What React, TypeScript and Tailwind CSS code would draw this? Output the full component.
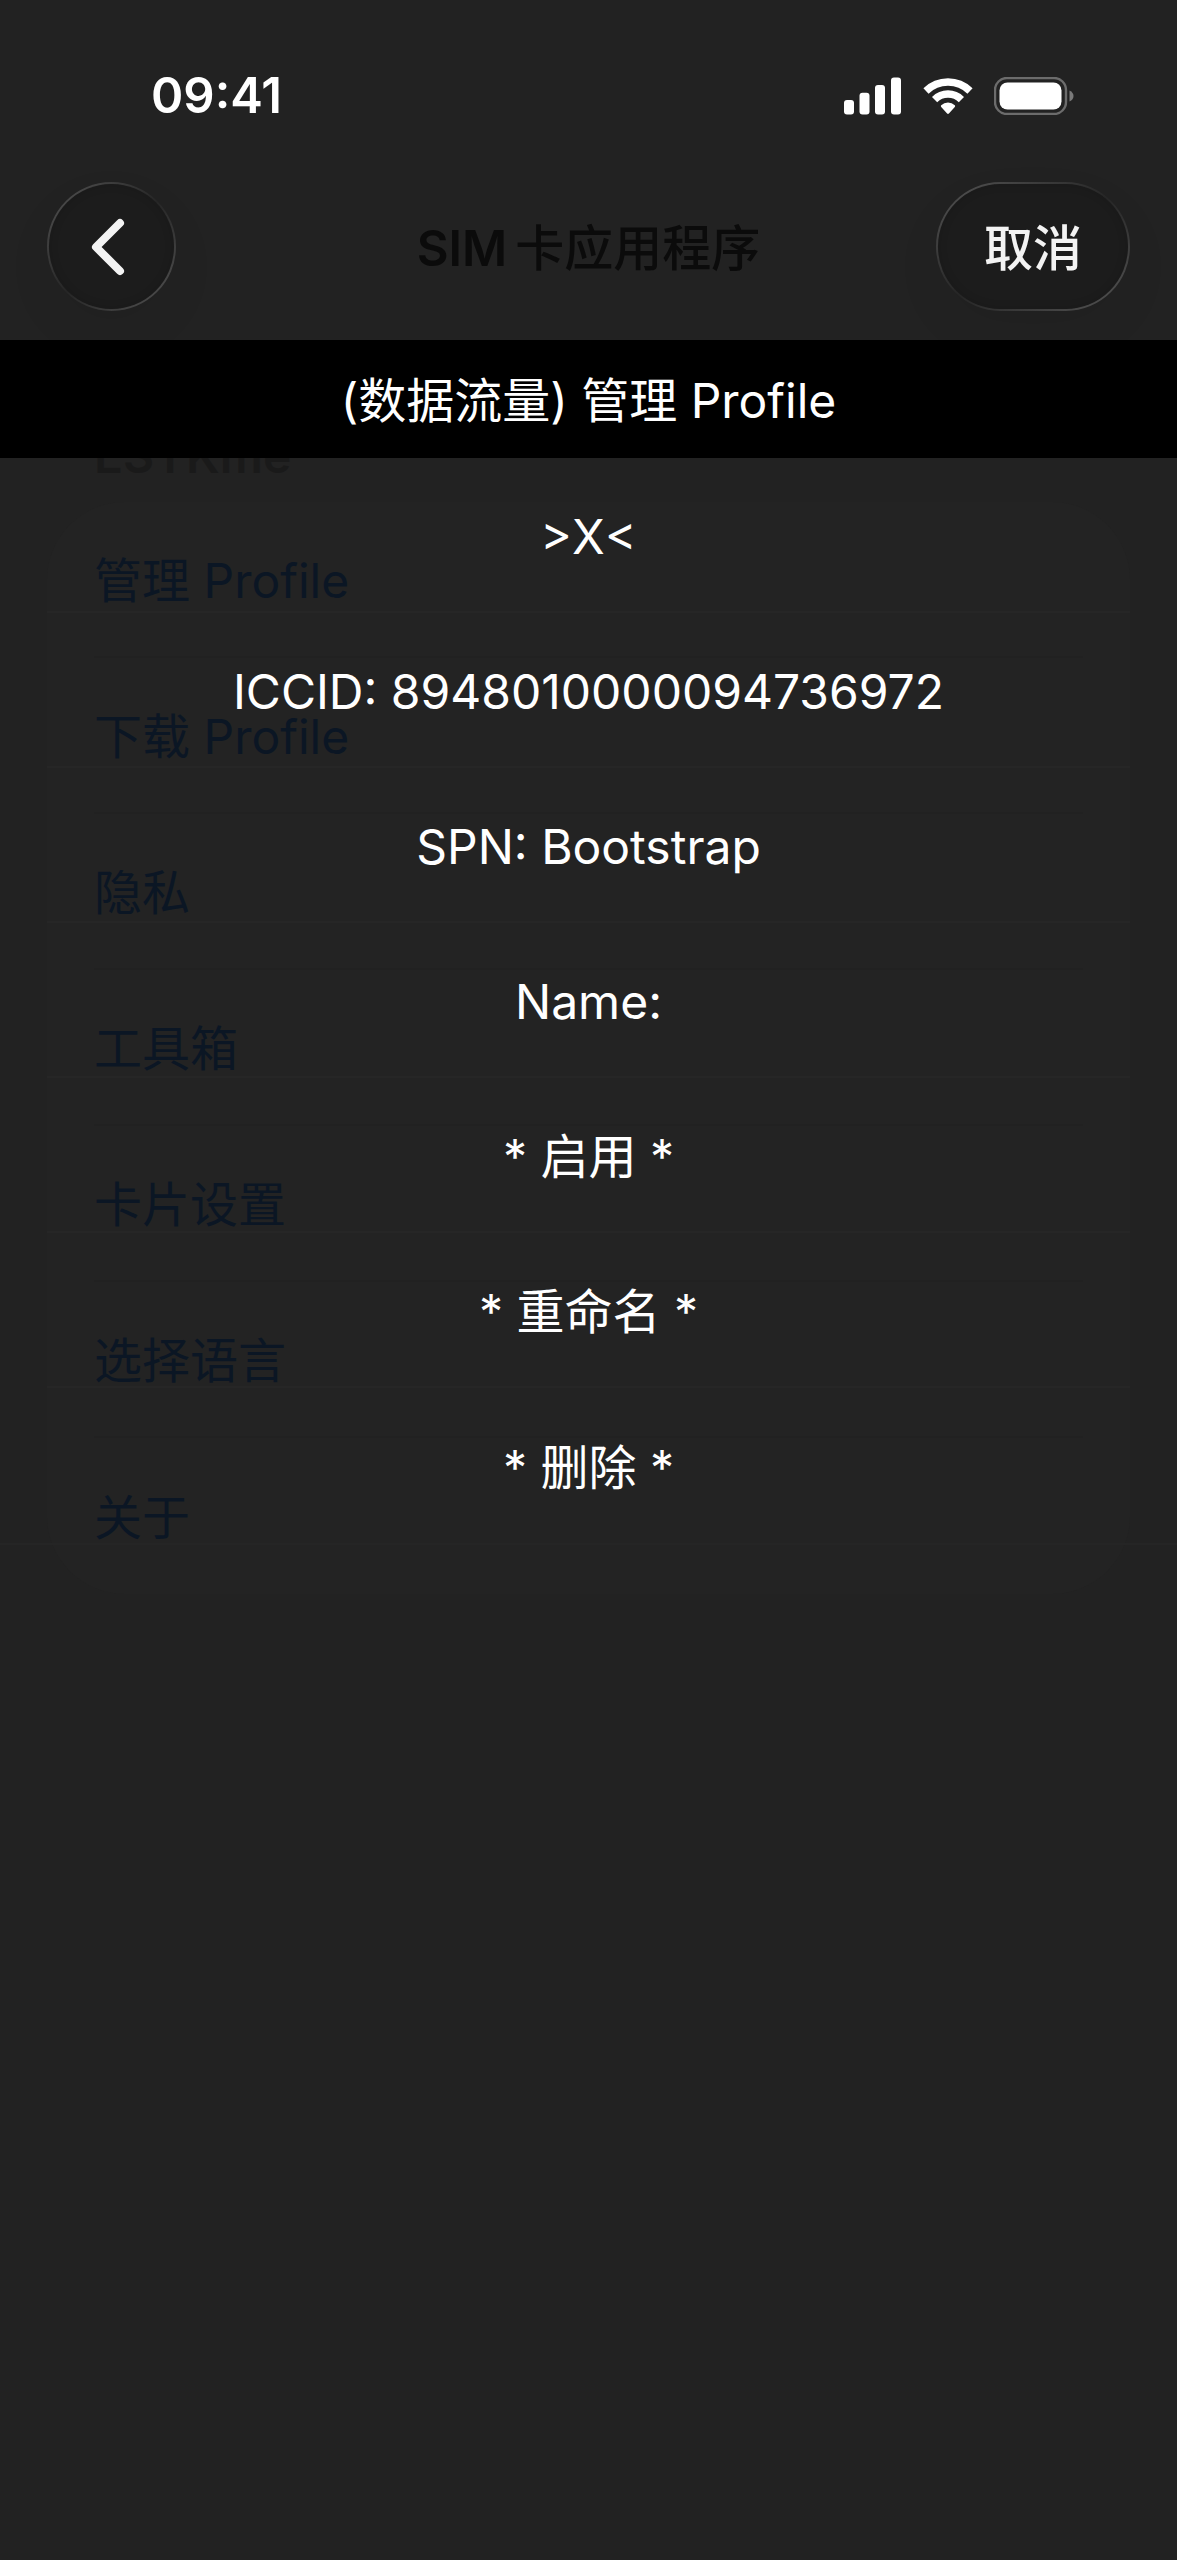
import React from 'react'

const menuItems = [
  '管理 Profile',
  '下载 Profile',
  '隐私',
  '工具箱',
  '卡片设置',
  '选择语言',
  '关于',
]

const profileOptions = [
  '>X<',
  'ICCID: 8948010000094736972',
  'SPN: Bootstrap',
  'Name:',
  '* 启用 *',
  '* 重命名 *',
  '* 删除 *',
]

const SignalIcon = () => (
  <svg width="58" height="38" viewBox="0 0 58 38" fill="white" aria-hidden="true">
    <rect x="0" y="23" width="10" height="14.5" rx="3" />
    <rect x="15.5" y="15.7" width="10" height="21.8" rx="3" />
    <rect x="31" y="8" width="10" height="29.5" rx="3" />
    <rect x="47" y="0.5" width="10" height="37" rx="3" />
  </svg>
)

const WifiIcon = () => (
  <svg width="50" height="38" viewBox="0 0 50 38" aria-hidden="true">
    <g fill="none" stroke="white" strokeWidth="7.4">
      <path d="M3 14A31.5 31.5 0 0 1 47 14" />
      <path d="M11.6 22.6A19 19 0 0 1 38.4 22.6" />
    </g>
    <path
      fill="white"
      d="M18.2 28.2A10 10 0 0 1 31.8 28.2Q32.6 29 31.8 29.9L25.9 36.6Q25 37.5 24.1 36.6L18.2 29.9Q17.4 29 18.2 28.2Z"
    />
  </svg>
)

const BatteryIcon = () => (
  <svg width="80" height="38" viewBox="0 0 80 38" aria-hidden="true">
    <rect x="1" y="1" width="71" height="36" rx="12" fill="none" stroke="#6c6c6c" strokeWidth="2.4" />
    <rect x="5.5" y="5.5" width="62" height="27" rx="8" fill="white" />
    <path d="M75.5 13.5Q79.5 15.5 79.5 19T75.5 24.5Z" fill="#7a7a7a" />
  </svg>
)

type GlassButtonProps = {
  label: string
  children: React.ReactNode
}

const GlassButton: React.FC<GlassButtonProps> = ({ label, children }) => (
  <button
    type="button"
    aria-label={label}
    className="h-[129px] cursor-pointer rounded-full bg-linear-to-br from-[#565656] via-[#262626] to-[#565656] p-[2px] shadow-[0_20px_50px_rgba(0,0,0,0.05)]"
  >
    <span className="flex h-full min-w-[125px] items-center justify-center rounded-full bg-[#1c1c1c] font-medium text-[#f3f3f3] shadow-[inset_0_0_10px_rgba(0,0,0,0.15)]">
      {children}
    </span>
  </button>
)

export default function App() {
  return (
    <div
      lang="zh-CN"
      className="flex min-h-screen flex-col bg-[#222222] font-['Inter','Noto_Sans_CJK_SC',sans-serif] text-[48px] leading-[60px] text-white"
    >
      <div className="flex items-center justify-between pt-[66px] pr-[103px] pl-[151px]">
        <time className="text-[49px] font-semibold">09:41</time>
        <div className="flex items-center gap-[21px]">
          <SignalIcon />
          <WifiIcon />
          <BatteryIcon />
        </div>
      </div>

      <header className="grid grid-cols-[1fr_auto_1fr] items-center px-[47px] pt-[56px] pb-[29px]">
        <div className="flex">
          <GlassButton label="返回">
            <svg width="42" height="60" viewBox="0 0 42 60" fill="none" aria-hidden="true">
              <path
                d="M29 6L5 30L29 54"
                stroke="currentColor"
                strokeWidth="8"
                strokeLinecap="round"
                strokeLinejoin="round"
              />
            </svg>
          </GlassButton>
        </div>
        <h1 className="flex gap-2 pt-1 text-[49px] font-medium text-[#0b0b0b]">
          <span className="font-semibold">SIM</span>
          <span>卡应用程序</span>
        </h1>
        <div className="flex justify-end">
          <GlassButton label="取消">
            <span className="px-[46px] pt-1 text-[49px]">取消</span>
          </GlassButton>
        </div>
      </header>

      {/* the dimmed menu and the open profile sheet share one grid cell */}
      <div className="grid grow grid-cols-1 items-start">
        <section className="col-start-1 row-start-1 px-[47px] pt-[86px]" aria-hidden="true">
          <h2 className="px-[47px] pb-4 font-semibold text-[#1a1a1a]">ESTKme</h2>
          <ul className="rounded-[78px] bg-[#232323] px-[47px] text-[#0b1624]">
            {menuItems.map((item) => (
              <li
                key={item}
                className="flex h-[156px] items-center border-b-2 border-[#212121] pt-1 last:border-b-0"
              >
                {item}
              </li>
            ))}
          </ul>
        </section>

        <main className="z-10 col-start-1 row-start-1">
          <h2 className="flex h-[118px] items-center justify-center bg-black pt-1">
            (数据流量) 管理 Profile
          </h2>
          <ul className="border-b-2 border-[#252525]">
            {profileOptions.map((option) => (
              <li
                key={option}
                className="mx-[47px] h-[155px] border-b-2 border-[#262626] last:border-b-0"
              >
                <button type="button" className="h-full w-full cursor-pointer pt-1">
                  {option}
                </button>
              </li>
            ))}
          </ul>
        </main>
      </div>
    </div>
  )
}
